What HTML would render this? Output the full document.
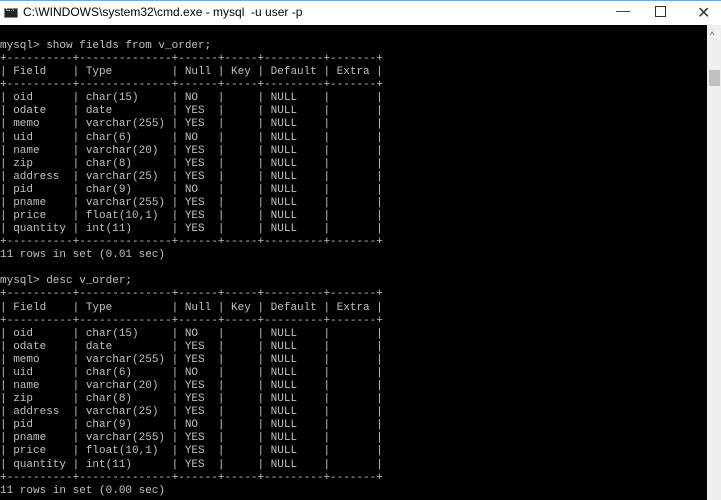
<!DOCTYPE html>
<html><head><meta charset="utf-8"><style>
html,body{margin:0;padding:0;width:721px;height:500px;overflow:hidden;background:#000;}
#tb{position:absolute;left:0;top:0;width:721px;height:25px;background:#fff;border-top:1px solid #6aa9d8;box-sizing:border-box;}
#tt{position:absolute;left:23px;top:4px;font:12px "Liberation Sans",sans-serif;color:#000;white-space:pre;}
#ic{position:absolute;left:4px;top:7px;width:14px;height:10px;background:#222;border:1px solid #888;box-sizing:border-box;}
#ic:after{content:"C:\\";position:absolute;left:1px;top:-2px;font:6px "Liberation Sans";color:#fff;}
.ctl{position:absolute;top:3px;font:14px "Liberation Sans",sans-serif;color:#333;}
#sb{position:absolute;left:707px;top:25px;width:14px;height:475px;background:#f0f0f0;}
#th{position:absolute;left:709px;top:70px;width:11px;height:16px;background:#c2c2c2;}
#pre{position:absolute;left:0;top:40px;margin:0;font:11px/13.08px "Liberation Mono",monospace;color:#c0c0c0;white-space:pre;}
</style></head><body>
<div id="tb"><div id="ic"></div><div id="tt">C:\WINDOWS\system32\cmd.exe - mysql  -u user -p</div>
<div class="ctl" style="left:616px;top:1px">—</div>
<div class="ctl" style="left:655px;top:5px;width:9px;height:9px;border:1px solid #333"></div>
<div class="ctl" style="left:697px;top:2px;font-size:16px">✕</div></div>
<div id="sb"><div style="position:absolute;left:3px;top:5px;font:9px 'Liberation Sans';color:#555">^</div></div><div id="th"></div>
<pre id="pre">mysql&gt; show fields from v_order;
+----------+--------------+------+-----+---------+-------+
| Field    | Type         | Null | Key | Default | Extra |
+----------+--------------+------+-----+---------+-------+
| oid      | char(15)     | NO   |     | NULL    |       |
| odate    | date         | YES  |     | NULL    |       |
| memo     | varchar(255) | YES  |     | NULL    |       |
| uid      | char(6)      | NO   |     | NULL    |       |
| name     | varchar(20)  | YES  |     | NULL    |       |
| zip      | char(8)      | YES  |     | NULL    |       |
| address  | varchar(25)  | YES  |     | NULL    |       |
| pid      | char(9)      | NO   |     | NULL    |       |
| pname    | varchar(255) | YES  |     | NULL    |       |
| price    | float(10,1)  | YES  |     | NULL    |       |
| quantity | int(11)      | YES  |     | NULL    |       |
+----------+--------------+------+-----+---------+-------+
11 rows in set (0.01 sec)

mysql&gt; desc v_order;
+----------+--------------+------+-----+---------+-------+
| Field    | Type         | Null | Key | Default | Extra |
+----------+--------------+------+-----+---------+-------+
| oid      | char(15)     | NO   |     | NULL    |       |
| odate    | date         | YES  |     | NULL    |       |
| memo     | varchar(255) | YES  |     | NULL    |       |
| uid      | char(6)      | NO   |     | NULL    |       |
| name     | varchar(20)  | YES  |     | NULL    |       |
| zip      | char(8)      | YES  |     | NULL    |       |
| address  | varchar(25)  | YES  |     | NULL    |       |
| pid      | char(9)      | NO   |     | NULL    |       |
| pname    | varchar(255) | YES  |     | NULL    |       |
| price    | float(10,1)  | YES  |     | NULL    |       |
| quantity | int(11)      | YES  |     | NULL    |       |
+----------+--------------+------+-----+---------+-------+
11 rows in set (0.00 sec)</pre>
</body></html>
